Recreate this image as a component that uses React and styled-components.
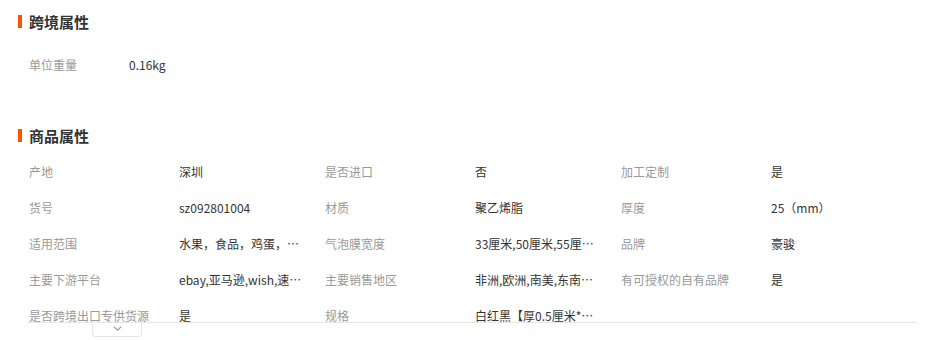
import React from 'react'
import styled, { createGlobalStyle } from 'styled-components'

const GlobalStyle = createGlobalStyle`
    body {
        margin: 0;
        background: #fff;
        font-family: "Noto Sans CJK SC", "Noto Sans", sans-serif;
        color: #333;
    }
`

const crossBorder = [{ label: '单位重量', value: '0.16kg' }]

const goods = [
    { label: '产地', value: '深圳' },
    { label: '是否进口', value: '否' },
    { label: '加工定制', value: '是' },
    { label: '货号', value: 'sz092801004' },
    { label: '材质', value: '聚乙烯脂' },
    { label: '厚度', value: '25（mm）' },
    { label: '适用范围', value: '水果，食品，鸡蛋，蔬菜，电子产品' },
    { label: '气泡膜宽度', value: '33厘米,50厘米,55厘米,60厘米' },
    { label: '品牌', value: '豪骏' },
    { label: '主要下游平台', value: 'ebay,亚马逊,wish,速卖通' },
    { label: '主要销售地区', value: '非洲,欧洲,南美,东南亚,北美' },
    { label: '有可授权的自有品牌', value: '是' },
    { label: '是否跨境出口专供货源', value: '是' },
    { label: '规格', value: '白红黑【厚0.5厘米*宽50厘米】' },
]

function Chevron() {
    return (
        <svg width="9" height="5" viewBox="0 0 9 5">
            <path d="M0.8 0.8 L4.5 4.2 L8.2 0.8" fill="none" stroke="#9aa0a6" strokeWidth="1.2" />
        </svg>
    )
}

function App() {
    return (
        <>
        <GlobalStyle />
        <Page>
            <Section>
                <Title>跨境属性</Title>
                <SimpleList>
                    {crossBorder.map(item => (
                        <Cell key={item.label}>
                            <Label width={100}>{item.label}</Label>
                            <Value>{item.value}</Value>
                        </Cell>
                    ))}
                </SimpleList>
            </Section>
            <Section $gap={43}>
                <Title>商品属性</Title>
                <FoldWrap>
                    <Grid>
                        {goods.map(item => (
                            <Cell key={item.label}>
                                <Label width={150}>{item.label}</Label>
                                <Value>{item.value}</Value>
                            </Cell>
                        ))}
                    </Grid>
                    <FoldButton>
                        <Chevron />
                    </FoldButton>
                </FoldWrap>
            </Section>
        </Page>
        </>
    )
}

export default App

const Page = styled.div`
    width: 936px;
    height: 340px;
    overflow: hidden;
    padding-top: 11px;
    box-sizing: border-box;
`
const Section = styled.section`
    margin-top: ${p => p.$gap || 0}px;
`
const Title = styled.h3`
    margin: 0;
    display: flex;
    align-items: center;
    height: 20px;
    padding-left: 18px;
    font-size: 15px;
    font-weight: 700;
    color: #333;
    &::before {
        content: '';
        width: 4px;
        height: 13px;
        margin-right: 7px;
        background: #ff5000;
    }
`
const SimpleList = styled.div`
    margin: 15px 0 0 28px;
`
const FoldWrap = styled.div`
    position: relative;
    margin: 8px 0 0 28px;
    width: 889px;
`
const Grid = styled.div`
    display: grid;
    grid-template-columns: repeat(3, 296px);
    height: 169px;
    overflow: hidden;
    border-bottom: 1px solid #e6e6e6;
`
const Cell = styled.div`
    display: flex;
    align-items: center;
    height: 36px;
    padding-left: 1px;
    font-size: 12px;
`
const Label = styled.span`
    width: ${p => p.width}px;
    flex-shrink: 0;
    color: #999;
    white-space: nowrap;
`
const Value = styled.span`
    max-width: 124px;
    color: #333;
    white-space: nowrap;
    overflow: hidden;
    text-overflow: ellipsis;
`
const FoldButton = styled.div`
    position: absolute;
    left: 64px;
    top: 170px;
    width: 50px;
    height: 14px;
    display: flex;
    justify-content: center;
    padding-top: 3px;
    box-sizing: border-box;
    border: 1px solid #e6e6e6;
    border-top: none;
    border-radius: 0 0 4px 4px;
    background: #fff;
    cursor: pointer;
`
